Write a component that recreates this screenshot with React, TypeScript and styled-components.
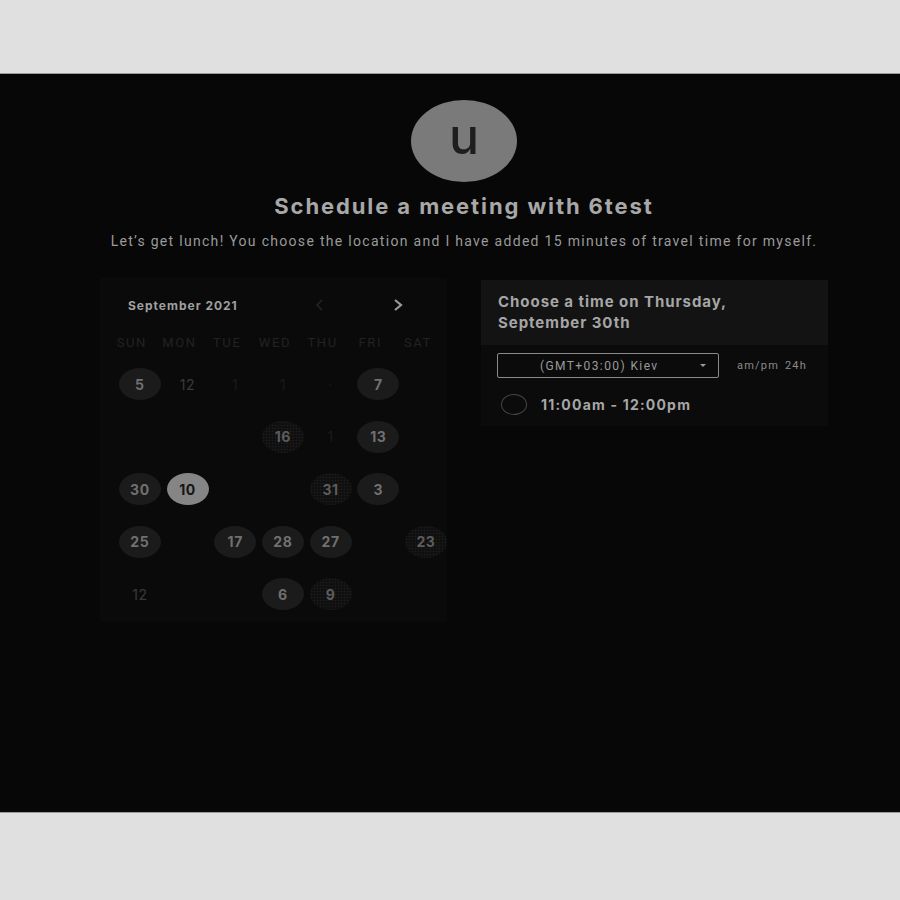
import React from "react";
import styled, {createGlobalStyle, css} from "styled-components";

const GlobalStyle = createGlobalStyle`
    body {
        margin: 0;
        background: #e0e0e0;
        font-family: Inter, "Noto Sans", sans-serif;
    }
`;

const Page = styled.div`
    display: flex;
    flex-direction: column;
    height: 900px;
`;

const Band = styled.div<{ h: number }>`
    height: ${(p) => p.h}px;
    background: #e0e0e0;
    flex-shrink: 0;
`;

const Main = styled.main`
    height: 740px;
    background: #070707;
    border-top: 1px solid #9a9a9a;
    border-bottom: 1px solid #9a9a9a;
    box-sizing: border-box;
    display: flex;
    flex-direction: column;
    align-items: center;
    padding: 26px 72px 0 100px;
`;

const Avatar = styled.div`
    width: 106px;
    height: 82px;
    border-radius: 50%;
    background: #7a7a7a;
    color: #1e1e1e;
    display: flex;
    align-items: center;
    justify-content: center;
    font-size: 50px;
    font-weight: 500;
    line-height: 1;
    padding-bottom: 10px;
    box-sizing: border-box;
`;

const Title = styled.h1`
    margin: 11px 0 0;
    font-size: 22px;
    line-height: 26px;
    font-weight: 700;
    color: #a8a8a8;
    letter-spacing: 1.9px;
`;

const Subtitle = styled.p`
    margin: 13px 0 0;
    font-family: Roboto, "Noto Sans", sans-serif;
    font-size: 14px;
    line-height: 18px;
    color: #9a9a9a;
    letter-spacing: 1.3px;
`;

const Columns = styled.div`
    display: flex;
    gap: 34px;
    margin-top: 28px;
    width: 728px;
    align-items: flex-start;
`;

const CalendarCard = styled.section`
    width: 347px;
    background: #0a0a0a;
    padding: 18px 0 1px 8px;
    box-sizing: border-box;
`;

const MonthRow = styled.div`
    display: flex;
    align-items: center;
    height: 18px;
    padding-left: 20px;
`;

const Month = styled.span`
    font-size: 12px;
    font-weight: 700;
    color: #a0a0a0;
    letter-spacing: 1px;
    width: 186px;
`;

const Nav = styled.svg<{ bright?: boolean }>`
    width: 12px;
    height: 14px;
    fill: none;
    stroke: ${(p) => (p.bright ? "#9a9a9a" : "#262626")};
    stroke-width: ${(p) => (p.bright ? 2.2 : 1.4)};
    margin-right: ${(p) => (p.bright ? 0 : "66px")};
`;

const Grid = styled.div`
    display: grid;
    grid-template-columns: repeat(7, 47.7px);
`;

const WeekDays = styled(Grid)`
    margin-top: 21px;
`;

const WeekDay = styled.span`
    text-align: center;
    font-family: Roboto, sans-serif;
    font-size: 13px;
    line-height: 16px;
    letter-spacing: 1.6px;
    color: #222;
`;

const Days = styled(Grid)`
    margin-top: 7px;
    padding-left: 8px;
    grid-auto-rows: 52.5px;
`;

type Kind = "none" | "open" | "faded" | "selected" | "dim" | "ghost";

const Day = styled.div<{ kind: Kind }>`
    display: flex;
    align-items: center;
    justify-content: center;

    span {
        width: 42px;
        height: 32px;
        border-radius: 50%;
        display: flex;
        align-items: center;
        justify-content: center;
        font-size: 14px;
        font-weight: 700;
        letter-spacing: 0.6px;
        ${(p) => p.kind === "open" && css`
            background: #1b1b1b;
            color: #707070;
        `}
        ${(p) => p.kind === "faded" && css`
            background: radial-gradient(circle, #1d1d1d 0.7px, #0f0f0f 1.1px) 0 0 / 3px 3px;
            color: #5c5c5c;
        `}
        ${(p) => p.kind === "selected" && css`
            background: #858585;
            color: #151515;
        `}
        ${(p) => p.kind === "dim" && css`
            color: #3a3a3a;
            font-weight: 400;
        `}
        ${(p) => p.kind === "ghost" && css`
            color: #1a1a1a;
            font-weight: 400;
        `}
    }
`;

const TimeCard = styled.section`
    width: 347px;
    background: #0b0b0b;
    margin-top: 2px;
    padding-bottom: 11px;
`;

const TimeHeader = styled.div`
    background: #131313;
    padding: 11px 17px 12px;
    font-size: 15px;
    line-height: 21px;
    font-weight: 700;
    color: #a6a6a6;
    letter-spacing: 0.95px;
`;

const ZoneRow = styled.div`
    display: flex;
    align-items: center;
    gap: 18px;
    margin-top: 8px;
    padding-left: 16px;
`;

const Select = styled.div`
    width: 222px;
    height: 25px;
    border: 1px solid #8a8a8a;
    border-radius: 2px;
    box-sizing: border-box;
    display: flex;
    align-items: center;
    padding: 0 12px 0 42px;
    font-family: Roboto, sans-serif;
    font-size: 12px;
    color: #9a9a9a;
    letter-spacing: 1.4px;
`;

const SelectText = styled.span`
    flex: 1;
`;

const Caret = styled.span`
    width: 0;
    height: 0;
    border-left: 3px solid transparent;
    border-right: 3px solid transparent;
    border-top: 3px solid #9a9a9a;
`;

const Format = styled.span`
    font-family: Roboto, sans-serif;
    font-size: 11px;
    color: #8a8a8a;
    word-spacing: 2px;
    letter-spacing: 1.2px;
`;

const Slot = styled.div`
    display: flex;
    align-items: center;
    gap: 14px;
    padding-left: 20px;
    margin-top: 16px;
`;

const Radio = styled.span`
    width: 24px;
    height: 19px;
    border-radius: 50%;
    border: 1px solid #444;
`;

const SlotText = styled.span`
    font-size: 14px;
    font-weight: 700;
    color: #a6a6a6;
    letter-spacing: 1.2px;
`;

const weekDays = ["SUN", "MON", "TUE", "WED", "THU", "FRI", "SAT"];

const rows: [string, Kind][][] = [
    [["5", "open"], ["12", "dim"], ["1", "ghost"], ["1", "ghost"], ["·", "ghost"], ["7", "open"], ["", "none"]],
    [["", "none"], ["", "none"], ["", "none"], ["16", "faded"], ["1", "ghost"], ["13", "open"], ["", "none"]],
    [["30", "open"], ["10", "selected"], ["", "none"], ["", "none"], ["31", "faded"], ["3", "open"], ["", "none"]],
    [["25", "open"], ["", "none"], ["17", "open"], ["28", "open"], ["27", "open"], ["", "none"], ["23", "faded"]],
    [["12", "dim"], ["", "none"], ["", "none"], ["6", "open"], ["9", "faded"], ["", "none"], ["", "none"]],
];

export default function App() {
    return (
        <>
            <GlobalStyle/>
            <Page>
                <Band h={73}/>
                <Main>
                    <Avatar>u</Avatar>
                    <Title>Schedule a meeting with 6test</Title>
                    <Subtitle>
                        Let’s get lunch! You choose the location and I have added 15 minutes of travel time for myself.
                    </Subtitle>
                    <Columns>
                        <CalendarCard>
                            <MonthRow>
                                <Month>September 2021</Month>
                                <Nav viewBox="0 0 12 14">
                                    <path d="M8 2 L3 7 L8 12"/>
                                </Nav>
                                <Nav bright viewBox="0 0 12 14">
                                    <path d="M3 2 L9 7 L3 12"/>
                                </Nav>
                            </MonthRow>
                            <WeekDays>
                                {weekDays.map((d) => (
                                    <WeekDay key={d}>{d}</WeekDay>
                                ))}
                            </WeekDays>
                            <Days>
                                {rows.flat().map(([label, kind], i) => (
                                    <Day key={i} kind={kind}>
                                        <span>{label}</span>
                                    </Day>
                                ))}
                            </Days>
                        </CalendarCard>
                        <TimeCard>
                            <TimeHeader>
                                Choose a time on Thursday,
                                <br/>
                                September 30th
                            </TimeHeader>
                            <ZoneRow>
                                <Select>
                                    <SelectText>(GMT+03:00) Kiev</SelectText>
                                    <Caret/>
                                </Select>
                                <Format>am/pm 24h</Format>
                            </ZoneRow>
                            <Slot>
                                <Radio/>
                                <SlotText>11:00am - 12:00pm</SlotText>
                            </Slot>
                        </TimeCard>
                    </Columns>
                </Main>
                <Band h={87}/>
            </Page>
        </>
    );
}
